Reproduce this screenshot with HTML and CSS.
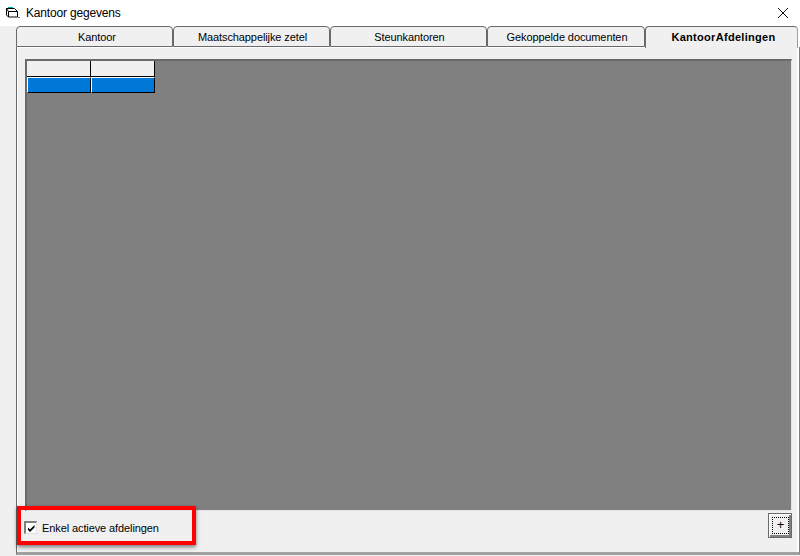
FILE: index.html
```html
<!doctype html>
<html lang="nl">
<head>
    <meta charset="UTF-8">
    <title>Kantoor gegevens</title>
    <link rel="stylesheet" href="styles.css">
</head>
<body>
    <div class="window">
        <div class="titlebar">
            <svg class="app-icon" width="16" height="16" viewBox="0 0 16 16">
                <path d="M1.5 3.5h8l3 3v5.5h-9l-2-2z" fill="#fff" stroke="#000"/>
                <path d="M1.5 3.5l2 3h9M3.5 6.5V12" fill="none" stroke="#000"/>
                <path d="M3 2.5h5" stroke="#0aa" fill="none"/>
                <path d="M13 12h2v1h-2z" fill="#777"/>
            </svg>
            <span class="title">Kantoor gegevens</span>
            <svg class="close" width="12" height="12" viewBox="0 0 12 12">
                <path d="M1 1l10 10M11 1L1 11" stroke="#111" fill="none"/>
            </svg>
        </div>

        <div class="content">
            <div class="tabs">
                <div class="tab tab-first">Kantoor</div>
                <div class="tab">Maatschappelijke zetel</div>
                <div class="tab">Steunkantoren</div>
                <div class="tab tab-wide">Gekoppelde documenten</div>
                <div class="tab tab-active">KantoorAfdelingen</div>
            </div>
            <div class="panel">
                <div class="grid-area">
                    <table class="grid">
                        <tr class="grid-head"><td></td><td></td></tr>
                        <tr class="grid-row"><td></td><td></td></tr>
                    </table>
                </div>
                <div class="footer">
                    <label class="check">
                        <span class="check-box">
                            <svg width="9" height="9" viewBox="0 0 9 9">
                                <path d="M1 3.5l2 2L7.500 1v2.500L3 8 1 6z" fill="#000"/>
                            </svg>
                        </span>
                        Enkel actieve afdelingen
                    </label>
                    <button class="add-button"><span>+</span></button>
                </div>
            </div>
        </div>
        <div class="highlight"></div>
    </div>
</body>
</html>
```

FILE: styles.css
```css
html, body {
    margin: 0;
    padding: 0;
}
body {
    width: 800px;
    height: 556px;
    overflow: hidden;
    background: #f0f0f0;
    font-family: "Liberation Sans", Arial, sans-serif;
    font-size: 11px;
    letter-spacing: -0.1px;
    color: #000;
}
.window {
    position: relative;
    height: 556px;
}
.titlebar {
    display: flex;
    align-items: center;
    height: 26px;
    background: #fff;
    padding: 0 11px 0 5px;
    font-size: 12px;
    letter-spacing: -0.17px;
}
.app-icon {
    margin-right: 5px;
}
.title {
    flex: 1;
}
.content {
    padding-left: 16px;
}
.tabs {
    display: flex;
    height: 21px;
    background: #fff;
}
.tab {
    box-sizing: border-box;
    width: 157px;
    height: 21px;
    padding-left: 2px;
    background: #f0f0f0;
    border: 1px solid #696969;
    border-radius: 4px 4px 0 0;
    text-align: center;
    line-height: 20px;
    white-space: nowrap;
}
.tab-first {
    padding-left: 5px;
}
.tab-wide {
    width: 158px;
}
.tab-active {
    position: relative;
    z-index: 1;
    width: 153px;
    height: 22px;
    padding-left: 4px;
    border-bottom: none;
    border-right-color: #a0a0a0;
    font-weight: bold;
    letter-spacing: 0.3px;
}
.panel {
    box-sizing: border-box;
    height: 508px;
    padding: 12px 7px 0 8px;
    background: #f0f0f0;
    border-left: 1px solid #696969;
    border-right: 1px solid #808080;
    border-bottom: 3px solid #a0a0a0;
    box-shadow: inset 1px 1px 0 #fff, inset -2px 0 0 #fff;
}
.grid-area {
    box-sizing: border-box;
    height: 452px;
    background: #808080;
    border-top: 2px solid #696969;
    border-left: 2px solid #696969;
    border-right: 1px solid #e3e3e3;
    border-bottom: 1px solid #e3e3e3;
}
.grid {
    border-collapse: separate;
    border-spacing: 0;
    table-layout: fixed;
}
.grid td {
    padding: 0;
    border-right: 1px solid #000;
    border-bottom: 1px solid #000;
}
.grid-head td {
    width: 63px;
    height: 15px;
    background: #f0f0f0;
}
.grid-row td {
    width: 62px;
    height: 14px;
    background: #0078d7;
    border-top: 1px solid #fff;
    border-left: 1px solid #fff;
}
.footer {
    display: flex;
    align-items: flex-start;
    justify-content: space-between;
    padding-top: 2px;
    margin-left: -1px;
}
.check {
    display: flex;
    align-items: center;
    gap: 5px;
    margin-top: 8px;
}
.check-box {
    box-sizing: border-box;
    display: flex;
    align-items: center;
    justify-content: center;
    width: 13px;
    height: 13px;
    background: #fff;
    border-top: 2px solid #808080;
    border-left: 2px solid #808080;
    border-right: 1px solid #e3e3e3;
    border-bottom: 1px solid #e3e3e3;
}
.add-button {
    box-sizing: border-box;
    width: 24px;
    height: 25px;
    padding: 3px 2px 3px 3px;
    background: #f0f0f0;
    border: 1px solid #696969;
    box-shadow: inset 1px 1px 0 #fff, inset -2px -2px 0 #808080;
    font-family: inherit;
    font-size: 13px;
}
.add-button span {
    box-sizing: border-box;
    display: block;
    height: 17px;
    line-height: 14px;
    border: 1px dotted #000;
}
.highlight {
    position: absolute;
    left: 17px;
    top: 506px;
    width: 171px;
    height: 31px;
    border: 4px solid #f00;
    box-shadow: 0 2px 4px rgba(0, 0, 0, 0.5);
}
```
